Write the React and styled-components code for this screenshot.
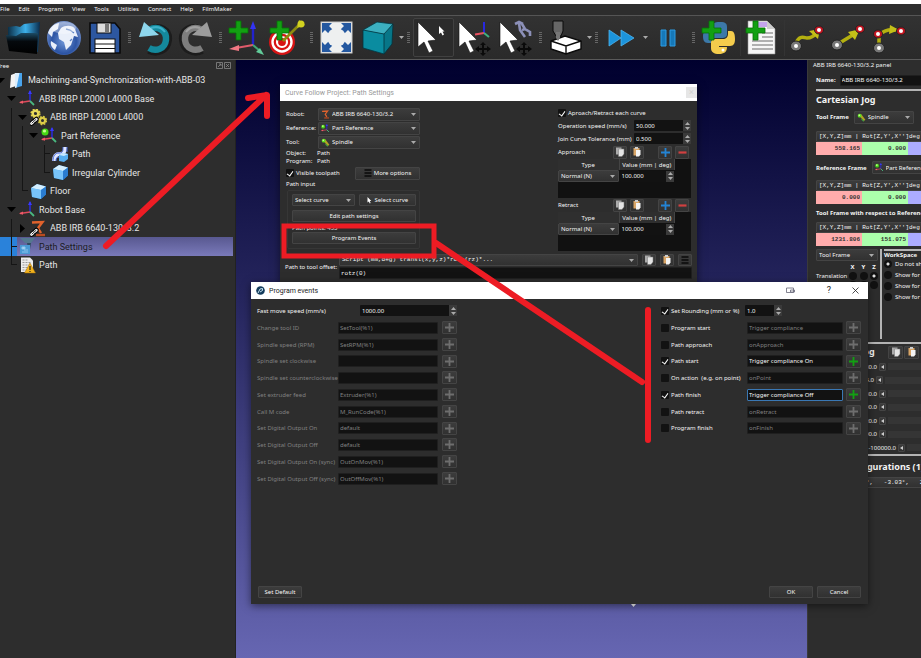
import { useId } from 'react';
import styled, { createGlobalStyle, css } from 'styled-components';

const GlobalStyle = createGlobalStyle`
  * {
    box-sizing: border-box;
  }

  body {
    margin: 0;
    background: #2d2d2d;
    color: #f4f4f4;
    font: 6px/8px 'Noto Sans', 'Open Sans', sans-serif;
  }

  button, input, select {
    margin: 0;
    padding: 0;
    border: none;
    background: none;
    color: inherit;
    font: inherit;
    outline: none;
  }

  svg {
    display: block;
    flex: none;
  }
`;

const mono = css`
  font-family: 'Liberation Mono', monospace;
`;

const raised = css`
  border: 1px solid #444;
  border-radius: 1px;
  background: linear-gradient(#3c3c3c, #313131);
`;

const Page = styled.div`
  position: relative;
  display: flex;
  flex-direction: column;
  min-height: 100vh;
  overflow: hidden;
  border-top: 4px solid #fff;
`;

const MenuBar = styled.nav`
  display: flex;
  gap: 9px;
  height: 12px;
  padding: 0;
  border-bottom: 1px solid #555;
`;

const MenuItem = styled.button`
  line-height: 11px;
  white-space: nowrap;
`;

const ToolBar = styled.div`
  display: flex;
  align-items: center;
  height: 44px;
  padding-left: 2px;
  border-bottom: 1px solid #5a5a5a;
  background: linear-gradient(#323232, #2a2a2a);
`;

const ToolButton = styled.button`
  display: flex;
  flex: none;
  align-items: center;
  justify-content: center;
  width: 41px;
  height: 39px;
  border: 1px solid ${p => (p.$active ? '#414141' : 'transparent')};
  border-radius: 2px;
  background: ${p => (p.$active ? '#2b2b2b' : 'none')};
`;

const MoreButton = styled.button`
  display: flex;
  flex: none;
  align-items: center;
  justify-content: center;
  width: 6px;
  height: 39px;
`;

const Grip = styled.span`
  flex: none;
  width: 3px;
  height: 11px;
  margin: 0 3px;
  background: repeating-linear-gradient(#666 0 1px, transparent 1px 2px);
`;

const Divider = styled.span`
  flex: none;
  width: 1px;
  height: 36px;
  margin: 0 1px;
  background: #343434;
`;

const Main = styled.main`
  display: flex;
  flex: 1;
`;

const TreePane = styled.aside`
  flex: none;
  width: 236px;
  border-right: 1px solid #222;
  overflow: hidden;
`;

const DockTitle = styled.div`
  display: flex;
  align-items: center;
  justify-content: space-between;
  height: 11px;
  margin-left: -3px;
  padding-right: 4px;
`;

const TreeList = styled.ul`
  margin: 0;
  padding: 0;
  list-style: none;
`;

const TreeRow = styled.li`
  display: flex;
  align-items: center;
  height: 18px;
  margin-right: 2px;
  font-family: Roboto, 'Noto Sans', sans-serif;
  font-size: 9px;
  line-height: 12px;
  white-space: nowrap;
  background: ${p => (p.$selected ? 'linear-gradient(90deg, #2a82da 17px, transparent 17px), linear-gradient(#585890, #7a7aba)' : 'none')};
  color: ${p => (p.$selected ? '#1c1c24' : '#e6e6e6')};

  &:nth-child(even) {
    height: 19px;
  }
`;

const Indent = styled.span`
  display: flex;
  flex: none;
  height: 100%;
  margin-left: -5px;
`;

const TreeIcon = styled.span`
  display: flex;
  flex: none;
  justify-content: center;
  width: 20px;
  margin-right: 2px;
`;

const Guide = styled.span`
  display: grid;
  grid-template-columns: 5px 6px;
  grid-template-rows: 1fr 1fr;
  width: 11px;
  height: 100%;

  &::before {
    content: '';
    grid-area: 1 / 2 / ${p => (p.$kind === 'elbow' ? 2 : 3)} / 3;
    border-left: 1px solid ${p => (p.$kind === 'blank' ? 'transparent' : '#151515')};
  }

  &::after {
    content: '';
    grid-area: 1 / 2 / 2 / 3;
    border-bottom: 1px solid ${p => (p.$kind === 'tee' || p.$kind === 'elbow' ? '#151515' : 'transparent')};
  }
`;

const Expander = styled.button`
  display: flex;
  align-items: center;
  justify-content: center;
  width: 11px;
  height: 100%;
`;

const Viewport = styled.section`
  flex: 1;
  min-width: 0;
  background: linear-gradient(#00002e, #26265e 40%, #6666b2);
`;

const Dialog = styled.section`
  position: absolute;
  left: ${p => p.$x}px;
  top: ${p => p.$y}px;
  display: flex;
  flex-direction: column;
  width: ${p => p.$w}px;
  min-height: ${p => p.$h}px;
  background: #2d2d2d;
  box-shadow: 0 2px 8px rgba(0, 0, 0, 0.5);
`;

const DialogTitle = styled.header`
  display: flex;
  align-items: center;
  gap: 4px;
  height: 17px;
  padding-left: 5px;
  background: #fff;
  color: ${p => (p.$inactive ? '#999' : '#222')};
  font-family: Roboto, 'Noto Sans', sans-serif;
  font-size: 7px;
  line-height: 10px;

  h1 {
    flex: 1;
    margin: 0;
    font: inherit;
  }
`;

const TitleButton = styled.button`
  display: flex;
  align-items: center;
  justify-content: center;
  width: ${p => p.$w || 25}px;
  height: 11px;
  margin-right: ${p => p.$gap || 0}px;
  background: ${p => (p.$ghost ? '#e6e6e6' : 'none')};
  color: ${p => (p.$ghost ? '#d0d0d0' : '#222')};
  font-size: 9px;
  line-height: 11px;
`;

const Button = styled.button`
  ${raised}
  display: flex;
  flex: ${p => (p.$w ? 'none' : 1)};
  align-items: center;
  justify-content: center;
  gap: 2px;
  width: ${p => (p.$w ? `${p.$w}px` : 'auto')};
  height: ${p => p.$h || 12}px;
  line-height: 8px;
  white-space: nowrap;
`;

const SelectBox = styled.span`
  ${raised}
  display: flex;
  flex: ${p => (p.$w ? 'none' : 1)};
  align-items: center;
  gap: 2px;
  width: ${p => (p.$w ? `${p.$w}px` : 'auto')};
  min-width: 0;
  height: ${p => p.$h || 12}px;
  padding: 0 3px 0 2px;
  ${p => p.$mono && mono}

  select {
    flex: 1;
    min-width: 0;
    height: 100%;
    appearance: none;
  }
`;

const TextInput = styled.input`
  flex: ${p => (p.$w ? 'none' : 1)};
  width: ${p => (p.$w ? `${p.$w}px` : 'auto')};
  min-width: 0;
  height: ${p => p.$h || 12}px;
  padding: 0 1px;
  border: 1px solid ${p => (p.$focused ? '#3a78b4' : '#1f1f1f')};
  border-radius: 1px;
  background: #121212;
  color: ${p => (p.$dim ? '#808080' : '#f4f4f4')};
  ${p => p.$mono && mono}
`;

const SpinBox = styled.span`
  display: flex;
  flex: ${p => (p.$w ? 'none' : 1)};
  width: ${p => (p.$w ? `${p.$w}px` : 'auto')};
  min-width: 0;
  height: 11px;
  border-radius: 1px;
  background: #121212;

  input {
    flex: 1;
    min-width: 0;
    padding-left: 2px;
  }
`;

const SpinArrows = styled.span`
  display: flex;
  flex-direction: column;
  align-items: center;
  justify-content: center;
  width: 8px;
  background: #3a3a3a;

  button {
    display: flex;
    align-items: center;
    justify-content: center;
    height: 5px;
  }
`;

const CheckLabel = styled.label`
  display: flex;
  align-items: center;
  gap: 2px;
  white-space: pre;
`;

const CheckBox = styled.input`
  display: flex;
  justify-content: center;
  width: 8px;
  height: 8px;
  border-radius: 1px;
  background: #121212;
  appearance: none;

  &:checked::after {
    content: '';
    width: 3px;
    height: 5px;
    margin-top: 1px;
    border: solid #fff;
    border-width: 0 1px 1px 0;
    transform: rotate(35deg);
  }
`;

const Radio = styled.input`
  flex: none;
  width: 8px;
  height: 8px;
  border-radius: 50%;
  background: #111;
  appearance: none;

  &:checked {
    background: radial-gradient(#ddd 1px, #111 2px);
  }
`;

const SettingsBody = styled.div`
  display: flex;
  justify-content: space-between;
  padding: 6px 6px 0;
`;

const SettingsLeft = styled.div`
  width: 134px;
`;

const SettingsRight = styled.div`
  width: 133px;
`;

const Field = styled.div`
  display: flex;
  align-items: center;
  justify-content: space-between;
  height: ${p => p.$h || 14}px;

  > label:first-child,
  > span:first-child {
    flex: none;
    width: ${p => (p.$label ? `${p.$label}px` : 'auto')};
    white-space: nowrap;
  }
`;

const Facts = styled.dl`
  display: grid;
  grid-template-columns: 31px 1fr;
  margin: 0 0 1px;

  dd {
    margin: 0;
  }
`;

const Group = styled.fieldset`
  display: flex;
  flex-direction: column;
  margin: 2px 0 0 1px;
  padding: 3px 3px 2px 4px;
  border: 1px solid #363636;
  border-radius: 2px;
`;

const GroupRow = styled.div`
  display: flex;
  gap: 4px;
  height: 12px;
  margin-bottom: ${p => p.$gap || 0}px;
`;

const Tools = styled.span`
  display: flex;
  gap: 3px;
  padding-right: 2px;
`;

const Spacer = styled.span`
  width: ${p => p.$w}px;
`;

const TableFrame = styled.div`
  height: 39px;
  background: #111;
`;

const MoveTable = styled.table`
  width: 117px;
  border-collapse: collapse;
  table-layout: fixed;

  th {
    height: 11px;
    padding: 0;
    border-right: 1px solid #444;
    background: #2f2f2f;
    font-weight: normal;
    font-size: 6px;
    white-space: nowrap;
  }

  th:first-child {
    width: 61px;
  }

  td {
    padding: 0;
    border-right: 1px solid #111;
  }

  td > span {
    display: flex;
  }
`;

const OffsetRow = styled.div`
  display: grid;
  grid-template-columns: 52px 1fr;
  align-items: center;
  padding: 3px 5px 2px;

  > label {
    white-space: nowrap;
  }
`;

const OffsetFields = styled.div`
  display: flex;
  flex-direction: column;
  gap: 1px;
  padding-left: 2px;

  > div {
    display: flex;
    gap: 4px;
  }
`;

const EventsBody = styled.div`
  display: flex;
  flex: 1;
  align-items: flex-start;
  justify-content: space-between;
  padding: 3px 7px 0 6px;
`;

const EventGrid = styled.div`
  display: grid;
  grid-auto-rows: 17px 17px 17px 16px;
  width: ${p => p.$w}px;
`;

const EventRow = styled.div`
  display: grid;
  grid-template-columns: ${p => p.$cols};
  align-items: center;
  color: ${p => (p.$dim ? '#808080' : '#f4f4f4')};

  > label {
    white-space: pre;
  }
`;

const PlusButton = styled(Button)`
  justify-self: end;
  color: ${p => (p.$on ? '#12a012' : '#6e6e6e')};
`;

const EventsFooter = styled.footer`
  display: flex;
  gap: 4px;
  padding: 0 7px 6px;

  button:first-child {
    margin-right: auto;
  }
`;

const RobotPane = styled.aside`
  flex: none;
  width: 114px;
  padding-left: 5px;
  overflow: hidden;
  border-left: 1px solid #3a3a3a;
`;

const PaneContent = styled.div`
  width: 220px;
  padding-left: 3px;
`;

const PaneTitle = styled.div`
  height: 11px;
  padding-top: 1px;
`;

const PaneRow = styled.div`
  display: flex;
  align-items: center;
  gap: ${p => p.$gap || 5}px;
  height: ${p => p.$h}px;
  font-weight: ${p => (p.$bold ? 'bold' : 'normal')};

  > span, input {
    font-weight: normal;
  }
`;

const PaneHeading = styled.h2`
  margin: 0;
  font-size: 9px;
  line-height: ${p => p.$h || 18}px;
  white-space: nowrap;
`;

const Rule = styled.hr`
  height: 2px;
  margin: 0;
  border: none;
  background: #b4b4b4;
`;

const PoseFormat = styled.div`
  ${raised}
  ${mono}
  height: 11px;
  padding-left: 2px;
  line-height: 10px;
  white-space: pre;
`;

const PoseCells = styled.div`
  ${mono}
  display: grid;
  grid-template-columns: repeat(4, 46px);
  height: 13px;
  overflow: hidden;
`;

const PoseCell = styled.input`
  padding-right: 2px;
  background: ${p => p.$color};
  color: #333;
  font-weight: bold;
  text-align: right;
`;

const JogArea = styled.div`
  display: flex;
  gap: 2px;
  height: 90px;
  margin: 3px 0;
`;

const JogFrame = styled.div`
  width: 66px;
  padding-right: 1px;
  border-right: 2px solid #b4b4b4;
`;

const AxisGrid = styled.div`
  display: grid;
  grid-template-columns: 31px 11px 11px 10px;
  grid-auto-rows: 9px;
  align-items: center;
  justify-items: center;
  padding-top: 1px;

  span {
    justify-self: start;
  }
`;

const WorkSpace = styled.fieldset`
  display: flex;
  flex: 1;
  flex-direction: column;
  gap: 3px;
  margin: 0;
  padding: 0;
  border: none;
  border-top: 2px solid #b4b4b4;

  strong {
    margin-bottom: -2px;
  }

  label {
    display: flex;
    gap: 3px;
    white-space: nowrap;
  }
`;

const JointHead = styled.div`
  display: grid;
  grid-template-columns: 71px 15px 15px;
  gap: 1px;
  align-items: center;
  height: 16px;
`;

const JointRow = styled.div`
  display: grid;
  grid-template-columns: ${p => p.$w}px 7px 1fr;
  gap: 2px;
  align-items: center;
  height: 13px;
  text-align: right;

  &:nth-of-type(even) {
    height: 14px;
  }
`;

const SliderTrack = styled.span`
  height: 7px;
  background: #353535;
`;

const Marks = styled.svg`
  position: absolute;
  left: 0;
  top: -4px;
  pointer-events: none;
`;

const Caret = ({ up, size = 5 }) => (
  <svg width={size} height={size - 2} viewBox="0 0 5 3">
    <path d={up ? 'M0 3h5L2.5 0z' : 'M0 0h5L2.5 3z'} fill="#aaa" />
  </svg>
);

const PlusIcon = ({ color = 'currentColor', size = 9 }) => (
  <svg width={size} height={size} viewBox="0 0 9 9">
    <path d="M4.5 0v9M0 4.5h9" stroke={color} strokeWidth="1.8" />
  </svg>
);

const MinusIcon = () => (
  <svg width="9" height="9" viewBox="0 0 9 9">
    <path d="M0.5 4.5h8" stroke="#d04040" strokeWidth="2.2" />
  </svg>
);

const CopyIcon = () => (
  <svg width="10" height="10" viewBox="0 0 10 10">
    <rect x="1" y="0.5" width="5.5" height="7" fill="#aaa" />
    <path d="M3.5 2h5.5v5L7 9.5H3.5z" fill="#e4e4e4" stroke="#777" strokeWidth="0.5" />
  </svg>
);

const PasteIcon = () => (
  <svg width="10" height="10" viewBox="0 0 10 10">
    <rect x="1.5" y="1" width="6" height="7.5" fill="#d9a566" />
    <rect x="3" y="0" width="3" height="2" fill="#ccc" />
    <path d="M4 3h4.5v4.5L7 9.500H4z" fill="#f4f4f4" />
  </svg>
);

const ListIcon = () => (
  <svg width="8" height="8" viewBox="0 0 8 8">
    <path d="M0.5 1h7M0.5 4h7M0.5 7h7" stroke="#0a0a0a" strokeWidth="1.6" />
  </svg>
);

const CursorIcon = () => (
  <svg width="6" height="7" viewBox="0 0 6 7">
    <path d="M1.5 0v5.5L2.8 4.5l1 2 0.8-0.5L3.8 4h1.5z" fill="#fff" />
  </svg>
);

const FrameIcon = ({ ball, size = 17 }) => (
  <svg width={size} height={size} viewBox="0 0 17 17">
    <path d="M11 11V1" stroke="#2a2ae0" strokeWidth="1.5" />
    <path d="M11 0l2 4H9z" fill="#3838ff" />
    <path d="M11 11L1 12.5" stroke="#e04a5c" strokeWidth="1.3" />
    <path d="M0 12.6l4-2v3.2z" fill="#f05a68" />
    <path d="M11 11l4 4" stroke="#4ab880" strokeWidth="1.8" />
    {ball && <circle cx="4" cy="5" r="3.5" fill="#46d814" />}
    {ball && <circle cx="3.5" cy="4" r="1.6" fill="#c8ff90" />}
  </svg>
);

const ToolIcon = ({ size = 11 }) => (
  <svg width={size} height={size} viewBox="0 0 12 12">
    <path d="M4 2l6 8" stroke="#b5a222" strokeWidth="3" />
    <path d="M6 8l3 3" stroke="#3c9c44" strokeWidth="1.5" />
    <circle cx="3.5" cy="3.5" r="2.5" fill="#5ee020" />
    <circle cx="3" cy="3" r="1" fill="#d8ffb0" />
  </svg>
);

const LinkMark = () => (
  <g fill="none" strokeLinecap="round">
    <path d="M1.5 14.5l5-4.5" stroke="#000" strokeWidth="4.5" />
    <path d="M1.5 14.5l1.6-1.5M4.8 11.6l1.5-1.4" stroke="#fff" strokeWidth="2.6" />
    <path d="M2 14l4-3.6" stroke="#000" strokeWidth="0.8" />
  </g>
);

const RobotIcon = ({ size = 17, link }) => (
  <svg width={size} height={size} viewBox="0 0 17 17">
    <path d="M2 2.5L12.5 2 8 8l3 5" fill="none" stroke="#e0622c" strokeWidth="2.4" />
    <path d="M6 15h9" stroke="#b84a20" strokeWidth="2.4" />
    {link && <LinkMark />}
  </svg>
);

const GearsIcon = () => (
  <svg width="17" height="17" viewBox="0 0 17 17">
    <circle cx="5.5" cy="4.5" r="2.8" fill="none" stroke="#e8da5c" strokeWidth="2.4" />
    <circle cx="5.5" cy="4.5" r="4.3" fill="none" stroke="#e2d24c" strokeWidth="1.6" strokeDasharray="1.9 1.48" />
    <circle cx="12.5" cy="11.5" r="2.6" fill="none" stroke="#dccc48" strokeWidth="2.2" />
    <circle cx="12.5" cy="11.5" r="4" fill="none" stroke="#d6c640" strokeWidth="1.4" strokeDasharray="1.8 1.34" />
    <LinkMark />
  </svg>
);

const CubeIcon = () => (
  <svg width="17" height="17" viewBox="0 0 17 17">
    <path d="M1 5l6-4 9 2.5v8L11 16l-9-2z" fill="#4aa8f0" stroke="#123" strokeWidth="0.5" />
    <path d="M1 5l6-4 9 2.5L11 7z" fill="#d4efff" />
    <path d="M11 7l5-3.5v8L11 16z" fill="#2a7cd0" />
    <path d="M1 5l10 2v9l-9-2z" fill="#78c4fa" />
  </svg>
);

const CurveIcon = () => (
  <svg width="17" height="17" viewBox="0 0 17 17">
    <path d="M2 15c0-5 2-7 6-7 4 0 5-2 5-7" fill="none" stroke="#dfe6ff" strokeWidth="4" />
    <path d="M1 15c0-5 2-8 6-8 4 0 4-2 4-6M4 15c0-3 1-4 4-4M15 1v5" fill="none" stroke="#4466d8" strokeWidth="1" />
    <path d="M7 9l4-2 5 1v5l-4 3-5-1z" fill="#56aef0" />
    <path d="M7 9l4-2 5 1-4 2z" fill="#c8e8ff" />
  </svg>
);

const StationIcon = () => (
  <svg width="14" height="17" viewBox="0 0 14 17">
    <path d="M2 3l5-2v13l-6 2z" fill="#f4f4f4" />
    <path d="M6 1h7v13l-7 2z" fill="#4aa4ec" />
    <path d="M6 1h4.500L7.500 15.600 6 16z" fill="#dceefc" />
  </svg>
);

const MachiningIcon = () => (
  <svg width="17" height="17" viewBox="0 0 17 17">
    <path d="M1 0h15l-4 5H6z" fill="#54788f" />
    <path d="M8 5h4l-1 6H9z" fill="#304a60" />
    <path d="M1 7h10v9H1z" fill="#4a9ad4" />
    <path d="M3 9h3v2H3zM5 12h4M3 14h6" fill="#b8dcf4" stroke="#8cc4ec" />
  </svg>
);

const ProgramIcon = () => (
  <svg width="17" height="17" viewBox="0 0 17 17">
    <path d="M2 0.5h9l3 3V15H2z" fill="#ececec" />
    <path d="M3.5 3h5M3.5 5.5h9M3.5 8h9M3.5 10.5h5M3.5 13h5" stroke="#999" strokeDasharray="2 1" />
    <path d="M11 6l5.5 10h-11z" fill="#f2b21c" stroke="#a87008" strokeWidth="0.5" />
    <path d="M11 9v4M11 14v1" stroke="#222" strokeWidth="1.2" />
  </svg>
);

const Big = ({ children }) => (
  <svg width="36" height="36" viewBox="0 0 36 36">{children}</svg>
);

const GreenPlus = () => (
  <path d="M8 1h5v7h7v5h-7v7H8v-7H1V8h7z" fill="#12a012" stroke="#087008" strokeWidth="0.8" />
);

const OpenIcon = () => (
  <Big>
    <defs>
      <linearGradient id="open" x1="0" y1="0" x2="1" y2="0">
        <stop offset="0" stopColor="#0c3048" />
        <stop offset="0.55" stopColor="#3cb0ea" />
        <stop offset="1" stopColor="#0a2c4c" />
      </linearGradient>
      <linearGradient id="openFront" x1="0" y1="0" x2="0" y2="1">
        <stop offset="0" stopColor="#1c4c66" />
        <stop offset="0.4" stopColor="#05090d" />
        <stop offset="1" stopColor="#000" />
      </linearGradient>
    </defs>
    <path d="M3 16V7l8-1 4 1 4-3 16-2-2 30-28-6z" fill="url(#open)" />
    <path d="M1 15l10 1 5-3 17 0-1 21-28-3z" fill="url(#openFront)" />
  </Big>
);

const GlobeIcon = () => (
  <Big>
    <defs>
      <radialGradient id="globe" cx="0.5" cy="0.6" r="0.6">
        <stop offset="0" stopColor="#6f96d8" />
        <stop offset="0.6" stopColor="#2c54a4" />
        <stop offset="1" stopColor="#7c98d0" />
      </radialGradient>
    </defs>
    <circle cx="18" cy="18" r="17" fill="url(#globe)" />
    <path d="M15 8c4-3 12-3 14 1l3 8-4-1-3 9-5 5-2-8-5-3-1-6zM2 13c2-6 6-9 11-10l-1 6-5 3-1 5zM5 21l6 4-2 5c-3-2-5-5-4-9z" fill="#e9effa" />
    <path d="M20 9l4 1 4 3M26 19l-2 2" fill="none" stroke="#5c82c4" strokeWidth="1.3" />
    <ellipse cx="18" cy="8" rx="12" ry="6" fill="#fff" opacity="0.35" />
  </Big>
);

const SaveIcon = () => (
  <Big>
    <path d="M3 3h25l5 6v24H3z" fill="#2d57a0" stroke="#0a0a0a" strokeWidth="1.6" />
    <rect x="10" y="3" width="14" height="10" fill="#ddd" stroke="#111" />
    <rect x="18" y="4" width="4" height="8" fill="#777" />
    <rect x="8" y="19" width="20" height="14" fill="#fff" stroke="#111" />
    <path d="M8 24h20M8 28.5h20" stroke="#111" strokeWidth="1.2" />
  </Big>
);

const TurnIcon = ({ redo }) => (
  <Big>
    <g transform={redo ? 'translate(36 0) scale(-1 1)' : undefined}>
      <path d="M14 10c9-5 18 1 17 10-1 10-11 14-19 10" fill="none" stroke="#1c1c1c" strokeWidth="8" />
      <path d="M12 10c9-5 18 1 17 10-1 9-10 12-17 8" fill="none" stroke={redo ? '#7d7d7d' : '#14899c'} strokeWidth="6.5" />
      <path d="M14 8c6-2 11 0 14 4" fill="none" stroke={redo ? '#a0a0a0' : '#3cb0c8'} strokeWidth="2" />
      <path d="M7 2L2 17l20-2z" fill={redo ? '#9c9c9c' : '#8ed6ec'} />
    </g>
  </Big>
);

const AddFrameIcon = () => (
  <Big>
    <path d="M25 25V5" stroke="#2222cc" strokeWidth="2.4" />
    <path d="M25 1l3 8h-6z" fill="#3434f4" />
    <path d="M25 25L8 28" stroke="#e05a6a" strokeWidth="2" />
    <path d="M1 29l10-4v6z" fill="#f07884" />
    <path d="M25 25l7 6" stroke="#42a874" strokeWidth="2" />
    <path d="M36 35l-8-3 4-4z" fill="#62cc9a" />
    <GreenPlus />
  </Big>
);

const AddTargetIcon = () => (
  <Big>
    <circle cx="13" cy="22" r="13" fill="#d81414" />
    <circle cx="13" cy="22" r="9.5" fill="none" stroke="#fff" strokeWidth="2.4" />
    <circle cx="13" cy="22" r="5" fill="none" stroke="#fff" strokeWidth="2.2" />
    <path d="M14 21L31 4" stroke="#8c8c10" strokeWidth="2.6" />
    <path d="M28 8l2-8 6 5z" fill="#c4c414" />
    <circle cx="32" cy="4" r="3.5" fill="#d2d220" />
    <GreenPlus />
  </Big>
);

const FitIcon = () => (
  <Big>
    <rect x="2" y="2" width="31" height="31" fill="#eef0f0" stroke="#c8c8c8" />
    <g fill="#2458a0">
      <path d="M3 3h10l-3 3 4 4-4 4-4-4-3 3z" />
      <path d="M32 3H22l3 3-4 4 4 4 4-4 3 3z" />
      <path d="M3 32h10l-3-3 4-4-4-4-4 4-3-3z" />
      <path d="M32 32H22l3-3-4-4 4-4 4 4 3-3z" />
    </g>
    <circle cx="17.5" cy="17.5" r="9.5" fill="#eef0f0" />
  </Big>
);

const ViewCubeIcon = () => (
  <Big>
    <path d="M3 10l14-8 16 2-1 20-8 10-21-6z" fill="#077688" />
    <path d="M3 10l14-8 16 2-9 10z" fill="#3cb0c0" />
    <path d="M3 10l21 4v20L3 28z" fill="#0a8ca0" />
    <path d="M3 10l21 4 9-10M24 14v20M3 10l14-8 16 2-1 20-8 10-21-6z" fill="none" stroke="#04323c" strokeWidth="0.8" />
  </Big>
);

const Arrow = () => (
  <path d="M2 2v25l6-5 5 11 4-2-5-10 8-1z" fill="#fff" stroke="#111" strokeWidth="0.6" />
);

const MoveMark = () => (
  <path d="M26 22l3 3h-2v3h3v-2l4 3-4 3v-2h-3v3h2l-3 3-3-3h2v-3h-3v2l-4-3 4-3v2h3v-3h-2z" fill="#0a0a0a" />
);

const SelectIcon = () => (
  <Big>
    <Arrow />
    <path d="M23 6v8l2-1.5 1.5 3 1.5-1-1.5-3h2z" fill="#fff" />
  </Big>
);

const MoveFrameIcon = () => (
  <Big>
    <Arrow />
    <path d="M27 13V2" stroke="#2828e0" strokeWidth="2" />
    <path d="M27 13l-9 1.5" stroke="#e85060" strokeWidth="2" />
    <path d="M27 13l5 4" stroke="#40b080" strokeWidth="2" />
    <MoveMark />
  </Big>
);

const MoveToolIcon = () => (
  <Big>
    <Arrow />
    <path d="M17 4l4-2 4 2M21 3l1 7 5 7M24 4l3 5 5 3 0 4M27 9l-3 1" fill="none" stroke="#8c90b8" strokeWidth="2.6" />
    <MoveMark />
  </Big>
);

const PartIcon = () => (
  <Big>
    <path d="M5 1h10v10l-2 5H8l-3-5z" fill="#666" stroke="#0a0a0a" />
    <path d="M3 21l14-5 16 5v8l-15 5-15-5z" fill="#fff" stroke="#0a0a0a" strokeWidth="1.4" />
    <path d="M3 21l15 5 15-5M18 26v8" fill="none" stroke="#0a0a0a" strokeWidth="1.4" />
    <path d="M8 12h4v6l-2 3-2-3z" fill="#777" />
  </Big>
);

const FastIcon = () => (
  <Big>
    <path d="M5 10l12 8-12 8zM17 10l13 8-13 8z" fill="#1c94dc" stroke="#4cb4f0" strokeWidth="0.8" />
  </Big>
);

const PauseIcon = () => (
  <Big>
    <path d="M10 10h5v16h-5zM19 10h5v16h-5z" fill="#1678b8" stroke="#2c9ce4" />
  </Big>
);

const PythonIcon = () => (
  <Big>
    <path d="M11 9c0-6 2-7 8-7s7 2 7 5v7c0 3-2 4-5 4h-7c-3 0-4 2-4 5H7c-4 0-5-3-5-7s2-6 6-6h11V9z" fill="#3c78a8" />
    <path d="M27 11h3c3 0 4 3 4 8 0 4-1 7-5 7H18v1h8c0 5-3 7-8 7s-8-2-8-6v-5c0-3 2-4 5-4h7c3 0 5-2 5-5z" fill="#f4cc4c" />
    <circle cx="22" cy="30" r="1.5" fill="#fff" />
    <GreenPlus />
  </Big>
);

const AddProgramIcon = () => (
  <Big>
    <path d="M3 1h19l8 8v25H3z" fill="#f6f6f6" stroke="#999" strokeWidth="0.6" />
    <path d="M12 2h10v5H12z" fill="#c4a4ec" />
    <path d="M22 1v8h8z" fill="#ccc" />
    <path d="M17 13h11M17 17h11M7 21h21M7 25h21M7 29h21" stroke="#999" strokeWidth="1.4" />
    <GreenPlus />
  </Big>
);

const Node = ({ x, y, red }) => (
  <g>
    <ellipse cx={x} cy={y} rx={red ? 4.5 : 5.5} ry={red ? 4 : 5} fill={red ? '#c41420' : '#777'} stroke="#222" />
    <circle cx={x} cy={y} r="2" fill="#fff" />
  </g>
);

const CurvePathIcon = () => (
  <Big>
    <path d="M7 23c3-7 6-6 11-5 5 0 7-2 9-5" fill="none" stroke="#b4b010" strokeWidth="3.5" />
    <path d="M20 11l11-2-2 10z" fill="#c4c018" />
    <Node x={7} y={26} />
    <Node x={30} y={10} red />
  </Big>
);

const LinePathIcon = () => (
  <Big>
    <path d="M8 24L26 13" stroke="#b4b010" strokeWidth="3.5" />
    <path d="M18 12l12-3-5 11z" fill="#c4c018" />
    <Node x={7} y={25} />
    <Node x={30} y={9} red />
  </Big>
);

const ArcPathIcon = () => (
  <Big>
    <path d="M8 25V15c5-5 10-6 17-5" fill="none" stroke="#b4b010" strokeWidth="3.5" />
    <path d="M19 5l9 5-10 4z" fill="#c4c018" />
    <Node x={8} y={28} />
    <Node x={7} y={14} red />
    <Node x={30} y={11} red />
  </Big>
);

const menus = ['File', 'Edit', 'Program', 'View', 'Tools', 'Utilities', 'Connect', 'Help', 'FilmMaker'];

const toolbar = [
  ['Open', OpenIcon], ['Online library', GlobeIcon], ['Save', SaveIcon], 'grip',
  ['Undo', TurnIcon], ['Redo', () => <TurnIcon redo />], 'grip',
  ['Add frame', AddFrameIcon], ['Add target', AddTargetIcon], 'grip',
  ['Fit all', FitIcon], ['Views', ViewCubeIcon], 'more', 'grip',
  ['Select', SelectIcon, true], ['Move frame', MoveFrameIcon], ['Move tool', MoveToolIcon], 'grip',
  ['Collisions', PartIcon], 'more', 'grip',
  ['Fast simulation', FastIcon], 'more', ['Pause', PauseIcon], 'grip',
  ['Add Python program', PythonIcon], 'divider', ['Add program', AddProgramIcon], 'divider',
  ['Joint move', CurvePathIcon], ['Linear move', LinePathIcon], ['Circular move', ArcPathIcon],
];

const tree = [
  { label: 'Machining-and-Synchronization-with-ABB-03', icon: StationIcon, guides: ['open'] },
  { label: 'ABB IRBP L2000 L4000 Base', icon: FrameIcon, guides: ['blank', 'open'] },
  { label: 'ABB IRBP L2000 L4000', icon: GearsIcon, guides: ['blank', 'line', 'open'] },
  { label: 'Part Reference', icon: () => <FrameIcon ball />, guides: ['blank', 'line', 'line', 'open'] },
  { label: 'Path', icon: CurveIcon, guides: ['blank', 'line', 'line', 'blank', 'tee'] },
  { label: 'Irregular Cylinder', icon: CubeIcon, guides: ['blank', 'line', 'line', 'blank', 'elbow'] },
  { label: 'Floor', icon: CubeIcon, guides: ['blank', 'line', 'elbow'] },
  { label: 'Robot Base', icon: FrameIcon, guides: ['blank', 'open'] },
  { label: 'ABB IRB 6640-130/3.2', icon: () => <RobotIcon link />, guides: ['blank', 'line', 'closed'] },
  { label: 'Path Settings', icon: MachiningIcon, guides: ['blank', 'tee'], selected: true },
  { label: 'Path', icon: ProgramIcon, guides: ['blank', 'elbow'] },
];

const leftEvents = [
  ['Change tool ID', 'SetTool(%1)'],
  ['Spindle speed (RPM)', 'SetRPM(%1)'],
  ['Spindle set clockwise', ''],
  ['Spindle set counterclockwise', ''],
  ['Set extruder feed', 'Extruder(%1)'],
  ['Call M code', 'M_RunCode(%1)'],
  ['Set Digital Output On', 'default'],
  ['Set Digital Output Off', 'default'],
  ['Set Digital Output On (sync)', 'OutOnMov(%1)'],
  ['Set Digital Output Off (sync)', 'OutOffMov(%1)'],
];

const rightEvents = [
  ['Program start', 'Trigger compliance'],
  ['Path approach', 'onApproach'],
  ['Path start', 'Trigger compliance On', true],
  ['On action  (e.g. on point)', 'onPoint'],
  ['Path finish', 'Trigger compliance Off', true, true],
  ['Path retract', 'onRetract'],
  ['Program finish', 'onFinish'],
];

const joints = [
  ['-180.0', 61], ['-65.0', 58], ['-180.0', 61], ['-300.0', 61], ['-120.0', 61], ['-300.0', 61], ['-100000.0', 80],
];

const Select = ({ id, label, icon, value, ...rest }) => (
  <SelectBox {...rest}>
    {icon}
    <select id={id} aria-label={label} defaultValue={value}>
      <option>{value}</option>
    </select>
    <Caret />
  </SelectBox>
);

const Spin = ({ id, label, value, w }) => (
  <SpinBox $w={w}>
    <input id={id} aria-label={label} defaultValue={value} />
    <SpinArrows>
      <button aria-label="Increase"><Caret up /></button>
      <button aria-label="Decrease"><Caret /></button>
    </SpinArrows>
  </SpinBox>
);

const TreeItem = ({ label, icon: Icon, guides, selected }) => (
  <TreeRow $selected={selected}>
    <Indent>
      {guides.map((kind, i) =>
        kind === 'open' || kind === 'closed' ? (
          <Expander key={i} aria-label={`Toggle ${label}`}>
            <svg width="9" height="9" viewBox="0 0 9 9">
              <path d={kind === 'open' ? 'M0 2h9L4.5 7z' : 'M2 0v9l5-4.5z'} fill="#000" />
            </svg>
          </Expander>
        ) : (
          <Guide key={i} $kind={kind} />
        )
      )}
    </Indent>
    <TreeIcon><Icon /></TreeIcon>
    {label}
  </TreeRow>
);

const MoveSection = ({ title }) => (
  <>
    <Field>
      <span>{title}</span>
      <Tools>
        <Button $w={14} $h={13} aria-label={`Copy ${title}`}><CopyIcon /></Button>
        <Button $w={14} $h={13} aria-label={`Paste ${title}`}><PasteIcon /></Button>
        <Spacer $w={8} />
        <Button $w={14} $h={13} aria-label={`Add ${title}`}><PlusIcon color="#2484d4" /></Button>
        <Button $w={14} $h={13} aria-label={`Remove ${title}`}><MinusIcon /></Button>
      </Tools>
    </Field>
    <TableFrame>
      <MoveTable>
        <thead>
          <tr><th>Type</th><th>Value (mm | deg)</th></tr>
        </thead>
        <tbody>
          <tr>
            <td><span><Select label={`${title} type`} value="Normal (N)" /></span></td>
            <td><span><Spin label={`${title} value`} value="100.000" /></span></td>
          </tr>
        </tbody>
      </MoveTable>
    </TableFrame>
  </>
);

const PathSettingsDialog = () => (
  <Dialog $x={280} $y={80} $w={417} $h={200}>
    <DialogTitle $inactive>
      <h1>Curve Follow Project: Path Settings</h1>
      <TitleButton $w={11} $ghost aria-label="Close">×</TitleButton>
    </DialogTitle>
    <SettingsBody>
      <SettingsLeft>
        <Field $label={32}>
          <label htmlFor="robot">Robot:</label>
          <Select id="robot" $h={13} icon={<RobotIcon size={9} />} value="ABB IRB 6640-130/3.2" />
        </Field>
        <Field $label={32}>
          <label htmlFor="reference">Reference:</label>
          <Select id="reference" $h={13} icon={<FrameIcon ball size={9} />} value="Part Reference" />
        </Field>
        <Field $label={32}>
          <label htmlFor="tool">Tool:</label>
          <Select id="tool" $h={13} icon={<ToolIcon size={9} />} value="Spindle" />
        </Field>
        <Facts>
          <dt>Object:</dt><dd>Path</dd>
          <dt>Program:</dt><dd>Path</dd>
        </Facts>
        <Field>
          <CheckLabel><CheckBox type="checkbox" defaultChecked /> Visible toolpath</CheckLabel>
          <Button $w={65} $h={13}><ListIcon />More options</Button>
        </Field>
        <div>Path input</div>
        <Group>
          <GroupRow $gap={4}>
            <Select label="Curve selection" value="Select curve" />
            <Button><CursorIcon />Select curve</Button>
          </GroupRow>
          <GroupRow $gap={2}><Button>Edit path settings</Button></GroupRow>
          <div>Path points: 453</div>
          <GroupRow $gap={2}><Button>Program Events</Button></GroupRow>
        </Group>
      </SettingsLeft>
      <SettingsRight>
        <Field $h={12}>
          <CheckLabel><CheckBox type="checkbox" defaultChecked /> Aproach/Retract each curve</CheckLabel>
        </Field>
        <Field $h={13} $label={76}>
          <label htmlFor="speed">Operation speed (mm/s)</label>
          <Spin id="speed" value="50.000" />
        </Field>
        <Field $h={13} $label={76}>
          <label htmlFor="tolerance">Join Curve Tolerance (mm)</label>
          <Spin id="tolerance" value="0.500" />
        </Field>
        <MoveSection title="Approach" />
        <MoveSection title="Retract" />
      </SettingsRight>
    </SettingsBody>
    <OffsetRow>
      <label htmlFor="offset">Path to tool offset:</label>
      <OffsetFields>
        <div>
          <Select $mono label="Offset format" value="Script (mm,deg) transl(x,y,z)*rotz(rz)*..." />
          <Button $w={14} aria-label="Copy offset"><CopyIcon /></Button>
          <Button $w={14} aria-label="Paste offset"><PasteIcon /></Button>
          <Button $w={14} aria-label="Offset options"><ListIcon /></Button>
        </div>
        <div><TextInput $mono id="offset" defaultValue="rotz(0)" /></div>
      </OffsetFields>
    </OffsetRow>
  </Dialog>
);

const LeftEvent = ({ label, value }) => {
  const id = useId();
  return (
    <EventRow $dim $cols="81px 100px 1fr">
      <label htmlFor={id}>{label}</label>
      <TextInput id={id} $dim defaultValue={value} />
      <PlusButton $w={15} $h={13} aria-label={`Add ${label}`}><PlusIcon /></PlusButton>
    </EventRow>
  );
};

const RightEvent = ({ label, value, on, focused }) => (
  <EventRow $cols="86px 96px 1fr">
    <CheckLabel><CheckBox type="checkbox" defaultChecked={on} />{label}</CheckLabel>
    <TextInput aria-label={label} $dim={!on} $focused={focused} defaultValue={value} />
    <PlusButton $w={15} $h={13} $on={on} aria-label={`Add ${label}`}><PlusIcon /></PlusButton>
  </EventRow>
);

const ProgramEventsDialog = () => (
  <Dialog $x={251} $y={278} $w={617} $h={322}>
    <DialogTitle>
      <svg width="9" height="9" viewBox="0 0 9 9">
        <circle cx="4.5" cy="4.5" r="4.3" fill="#143c5c" />
        <path d="M2 7l2-4 2.5-0.5v2L4 6" fill="none" stroke="#c8e4f4" />
      </svg>
      <h1>Program events</h1>
      <TitleButton $gap={12} aria-label="Dock">
        <svg width="9" height="7" viewBox="0 0 9 7">
          <path d="M0.5 1h7v4.5h-7zM4.5 3h4v2h-4z" fill="#fff" stroke="#667" strokeWidth="0.8" />
        </svg>
      </TitleButton>
      <TitleButton $w={20} aria-label="Help">?</TitleButton>
      <TitleButton aria-label="Close">
        <svg width="7" height="7" viewBox="0 0 7 7">
          <path d="M0.5 0.5l6 6M6.5 0.5l-6 6" stroke="#222" strokeWidth="0.8" />
        </svg>
      </TitleButton>
    </DialogTitle>
    <EventsBody>
      <EventGrid $w={200}>
        <EventRow $cols="103px 1fr">
          <label htmlFor="fast">Fast move speed (mm/s)</label>
          <Spin id="fast" value="1000.00" />
        </EventRow>
        {leftEvents.map(([label, value]) => <LeftEvent key={label} label={label} value={value} />)}
      </EventGrid>
      <EventGrid $w={200}>
        <EventRow $cols="84px 1fr">
          <CheckLabel><CheckBox type="checkbox" defaultChecked />Set Rounding (mm or %)</CheckLabel>
          <Spin label="Rounding" value="1.0" w={37} />
        </EventRow>
        {rightEvents.map(([label, value, on, focused]) => (
          <RightEvent key={label} label={label} value={value} on={on} focused={focused} />
        ))}
      </EventGrid>
    </EventsBody>
    <EventsFooter>
      <Button $w={44}>Set Default</Button>
      <Button $w={44}>OK</Button>
      <Button $w={44}>Cancel</Button>
    </EventsFooter>
  </Dialog>
);

const Pose = ({ name, values }) => (
  <>
    <PoseFormat>{"[X,Y,Z]mm | Rot[Z,Y',X'']deg - Staubli/Mecademic"}</PoseFormat>
    <PoseCells>
      {values.map((value, i) => (
        <PoseCell key={i} aria-label={`${name} ${'XYZ'[i]}`} $color={['#ffacac', '#acffac', '#acacff'][i]} defaultValue={value} />
      ))}
    </PoseCells>
  </>
);

const RobotPanel = () => (
  <RobotPane>
    <PaneTitle>ABB IRB 6640-130/3.2 panel</PaneTitle>
    <PaneContent>
      <PaneRow $h={18} $gap={4} $bold>
        <label htmlFor="name">Name:</label>
        <TextInput id="name" $h={11} defaultValue="ABB IRB 6640-130/3.2" />
      </PaneRow>
      <Rule />
      <PaneHeading>Cartesian Jog</PaneHeading>
      <PaneRow $h={16} $bold>
        <label htmlFor="toolFrame">Tool Frame</label>
        <Select id="toolFrame" $w={60} $h={13} icon={<ToolIcon size={9} />} value="Spindle" />
      </PaneRow>
      <PaneRow $h={6} />
      <Pose name="Tool frame" values={['558.165', '0.000', '1455.0']} />
      <PaneRow $h={25} $bold>
        <label htmlFor="refFrame">Reference Frame</label>
        <Select id="refFrame" $w={90} $h={13} icon={<FrameIcon ball size={9} />} value="Part Reference" />
      </PaneRow>
      <Pose name="Reference frame" values={['0.000', '0.000', '0.000']} />
      <PaneRow $h={18} $bold>Tool Frame with respect to Reference Frame</PaneRow>
      <Pose name="Relative pose" values={['1231.806', '151.075', '820.500']} />
      <JogArea>
        <JogFrame>
          <PaneRow $h={12}>
            <Select label="Jog frame" $w={62} $h={12} value="Tool Frame" />
          </PaneRow>
          <AxisGrid>
            <span /><b>X</b><b>Y</b><b>Z</b>
            <span>Translation</span>
            {['X', 'Y', 'Z'].map(a => <Radio key={a} type="radio" name="jog" aria-label={`Translation ${a}`} defaultChecked={a === 'Z'} />)}
            <span>Rotation</span>
            {['X', 'Y', 'Z'].map(a => <Radio key={a} type="radio" name="jog" aria-label={`Rotation ${a}`} />)}
          </AxisGrid>
        </JogFrame>
        <WorkSpace>
          <strong>WorkSpace</strong>
          <label><Radio type="radio" name="ws" defaultChecked /> Do not show</label>
          <label><Radio type="radio" name="ws" /> Show for current tool</label>
          <label><Radio type="radio" name="ws" /> Show for robot flange</label>
          <label><Radio type="radio" name="ws" /> Show for wrist center</label>
        </WorkSpace>
      </JogArea>
      <Rule />
      <JointHead>
        <PaneHeading $h={14}>Joint Axis Jog</PaneHeading>
        <Button $w={15} $h={13} aria-label="Copy joints"><CopyIcon /></Button>
        <Button $w={15} $h={13} aria-label="Paste joints"><PasteIcon /></Button>
      </JointHead>
      <div>
        {joints.map(([value, w], i) => (
          <JointRow key={i} $w={w}>
            <span>{value}</span>
            <Button $w={7} $h={8} aria-label="Decrease joint">
              <svg width="3" height="4" viewBox="0 0 3 4"><path d="M3 0v4L0 2z" fill="#ccc" /></svg>
            </Button>
            <SliderTrack />
          </JointRow>
        ))}
      </div>
      <Rule />
      <PaneHeading $h={21}>Other configurations (1)</PaneHeading>
      <PoseFormat>{'[       0.000°,   -3.03°,   25.10°]'}</PoseFormat>
    </PaneContent>
  </RobotPane>
);

const App = () => (
  <>
    <GlobalStyle />
    <Page>
      <MenuBar>
        {menus.map(menu => <MenuItem key={menu}>{menu}</MenuItem>)}
      </MenuBar>
      <ToolBar>
        {toolbar.map((item, i) => {
          if (item === 'grip') return <Grip key={i} />;
          if (item === 'divider') return <Divider key={i} />;
          if (item === 'more') return <MoreButton key={i} aria-label="More"><Caret /></MoreButton>;
          const [label, Icon, active] = item;
          return <ToolButton key={i} aria-label={label} $active={active}><Icon /></ToolButton>;
        })}
      </ToolBar>
      <Main>
        <TreePane>
          <DockTitle>
            Tree
            <svg width="15" height="7" viewBox="0 0 15 7">
              <path d="M0.5 0.5h6v6h-6zM8.5 0.5h6v6h-6zM2 5l3-3M3 2h2v2M10 2l3 3M13 2l-3 3" fill="none" stroke="#888" strokeWidth="0.8" />
            </svg>
          </DockTitle>
          <TreeList>
            {tree.map((item, i) => <TreeItem key={i} {...item} />)}
          </TreeList>
        </TreePane>
        <Viewport />
        <RobotPanel />
      </Main>
      <PathSettingsDialog />
      <ProgramEventsDialog />
      <Marks width="921" height="658" viewBox="0 0 921 658" fill="none" stroke="#ed1c24" strokeWidth="6" strokeLinecap="round">
        <path d="M106 246L266 95M248 98l19-3v21" strokeLinejoin="round" />
        <path d="M284 226h150v30H284z" strokeWidth="5" strokeLinecap="butt" />
        <path d="M436 243L642 382" />
        <path d="M648 310v130" />
        <path d="M631 604h5l-2.5 3z" fill="#bbb" stroke="none" />
      </Marks>
    </Page>
  </>
);

export default App;
